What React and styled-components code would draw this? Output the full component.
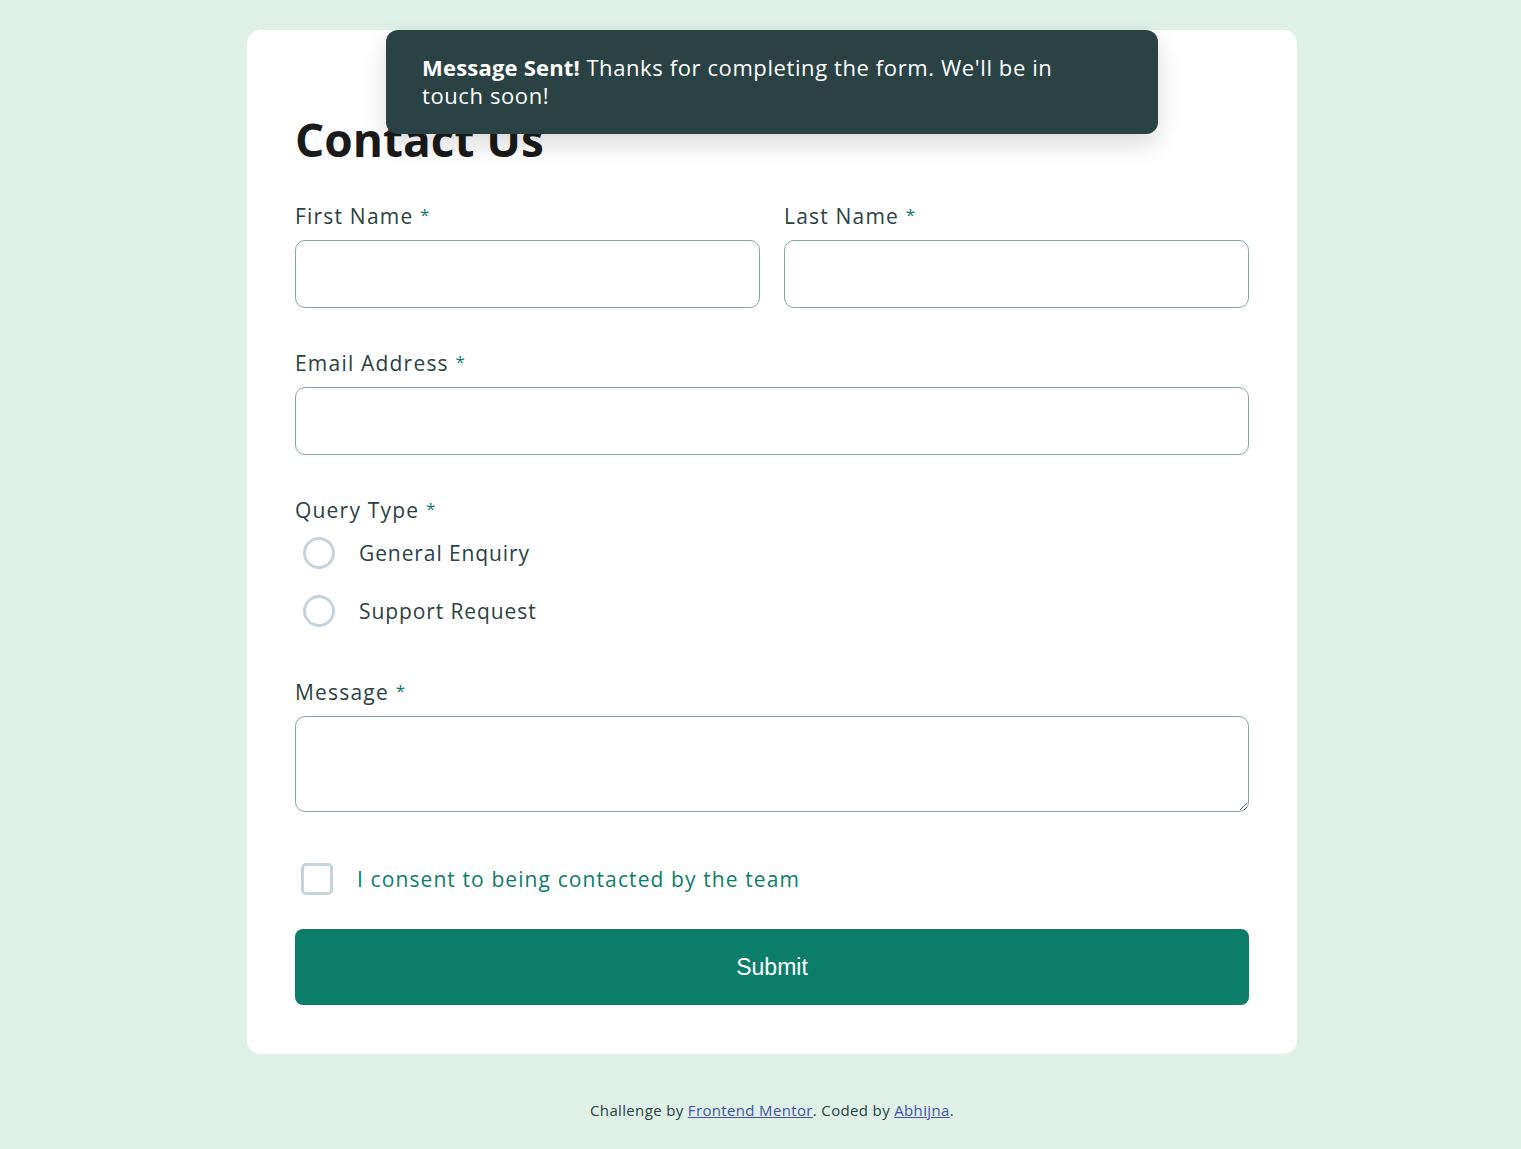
import React from 'react';
import styled, {createGlobalStyle} from 'styled-components';

const GlobalStyle = createGlobalStyle`
  body {
    margin: 0;
    background: #dff1e7;
    font-family: "Open Sans", "Noto Sans", sans-serif;
    color: #2a4244;
  }
`;

function App() {
  return (
    <Page>
      <GlobalStyle />
      <Card>
        <Toast>
          <strong>Message Sent!</strong> Thanks for completing the form. We'll be in touch soon!
        </Toast>
        <Title>Contact Us</Title>
        <Form onSubmit={(e) => e.preventDefault()}>
          <Row>
            <Field>
              <Label>First Name <Star>*</Star></Label>
              <Input type="text" />
            </Field>
            <Field>
              <Label>Last Name <Star>*</Star></Label>
              <Input type="text" />
            </Field>
          </Row>
          <Field>
            <Label>Email Address <Star>*</Star></Label>
            <Input type="email" />
          </Field>
          <Fieldset>
            <Label as="legend">Query Type <Star>*</Star></Label>
            <Option>
              <Radio />
              <span>General Enquiry</span>
            </Option>
            <Option>
              <Radio />
              <span>Support Request</span>
            </Option>
          </Fieldset>
          <Field>
            <Label>Message <Star>*</Star></Label>
            <TextArea />
          </Field>
          <Consent>
            <Box />
            <span>I consent to being contacted by the team</span>
          </Consent>
          <Submit type="submit">Submit</Submit>
        </Form>
      </Card>
      <Footer>
        Challenge by <a href="#">Frontend Mentor</a>. Coded by <a href="#">Abhijna</a>.
      </Footer>
    </Page>
  );
}

export default App;

const Page = styled.div`
  min-height: 1149px;
  box-sizing: border-box;
  padding: 30px 0 0 23px;
  display: flex;
  flex-direction: column;
  align-items: center;
`

const Card = styled.div`
  position: relative;
  width: 1050px;
  box-sizing: border-box;
  background: #fff;
  border-radius: 14px;
  padding: 48px 48px 49px;
`

const Toast = styled.div`
  position: absolute;
  top: 0;
  left: 139px;
  width: 772px;
  box-sizing: border-box;
  padding: 23px 70px 25px 36px;
  background: #2a4244;
  color: #fff;
  border-radius: 12px;
  font-size: 22px;
  line-height: 28px;
  letter-spacing: 0.6px;
  box-shadow: 0 10px 24px rgba(0, 0, 0, 0.15);
  strong {
    font-weight: 700;
    letter-spacing: 0.2px;
  }
`

const Title = styled.h1`
  margin: 34px 0 37px;
  font-size: 46px;
  line-height: 54px;
  font-weight: 700;
  color: #1a1a1a;
`

const Form = styled.form`
  display: flex;
  flex-direction: column;
`

const Row = styled.div`
  display: grid;
  grid-template-columns: 1fr 1fr;
  gap: 24px;
  margin-bottom: 42px;
`

const Field = styled.div`
  display: flex;
  flex-direction: column;
`

const Label = styled.label`
  font-size: 21px;
  line-height: 24px;
  letter-spacing: 1.2px;
  color: #2a4244;
  margin-bottom: 12px;
  padding: 0;
`

const Star = styled.span`
  color: #0c7d69;
  font-size: 17px;
  vertical-align: 3px;
`

const Input = styled.input`
  height: 68px;
  box-sizing: border-box;
  border: 1px solid #87a3a6;
  border-radius: 10px;
  font: inherit;
  padding: 0 20px;
  outline: none;
`

const Fieldset = styled.fieldset`
  border: none;
  margin: 42px 0 39px;
  padding: 0;
  display: flex;
  flex-direction: column;
  legend {
    padding: 0;
    margin-bottom: 10px;
  }
`

const Option = styled.label`
  display: flex;
  align-items: center;
  gap: 24px;
  height: 58px;
  padding-left: 8px;
  font-size: 21px;
  letter-spacing: 0.9px;
  color: #2a4244;
  &:first-of-type {
    margin-top: -8px;
  }
`

const Radio = styled.span`
  width: 32px;
  height: 32px;
  box-sizing: border-box;
  border: 3px solid #c7d3dc;
  border-radius: 50%;
  flex-shrink: 0;
`

const TextArea = styled.textarea`
  height: 96px;
  box-sizing: border-box;
  border: 1px solid #87a3a6;
  border-radius: 10px;
  font: inherit;
  padding: 12px 20px;
  resize: vertical;
  outline: none;
`

const Consent = styled.label`
  display: flex;
  align-items: center;
  gap: 24px;
  padding-left: 6px;
  margin: 51px 0 34px;
  font-size: 21px;
  letter-spacing: 1.1px;
  color: #0c7d69;
`

const Box = styled.span`
  width: 32px;
  height: 32px;
  box-sizing: border-box;
  border: 3px solid #c7d3dc;
  border-radius: 5px;
  flex-shrink: 0;
`

const Submit = styled.button`
  height: 76px;
  border: none;
  border-radius: 8px;
  background: #0c7d69;
  color: #fff;
  font-family: "Liberation Sans", Arial, sans-serif;
  font-size: 23px;
  cursor: pointer;
`

const Footer = styled.p`
  margin: 46px 0 0;
  font-size: 15px;
  letter-spacing: 0.35px;
  color: #2a4244;
  a {
    color: #4451a8;
  }
`
